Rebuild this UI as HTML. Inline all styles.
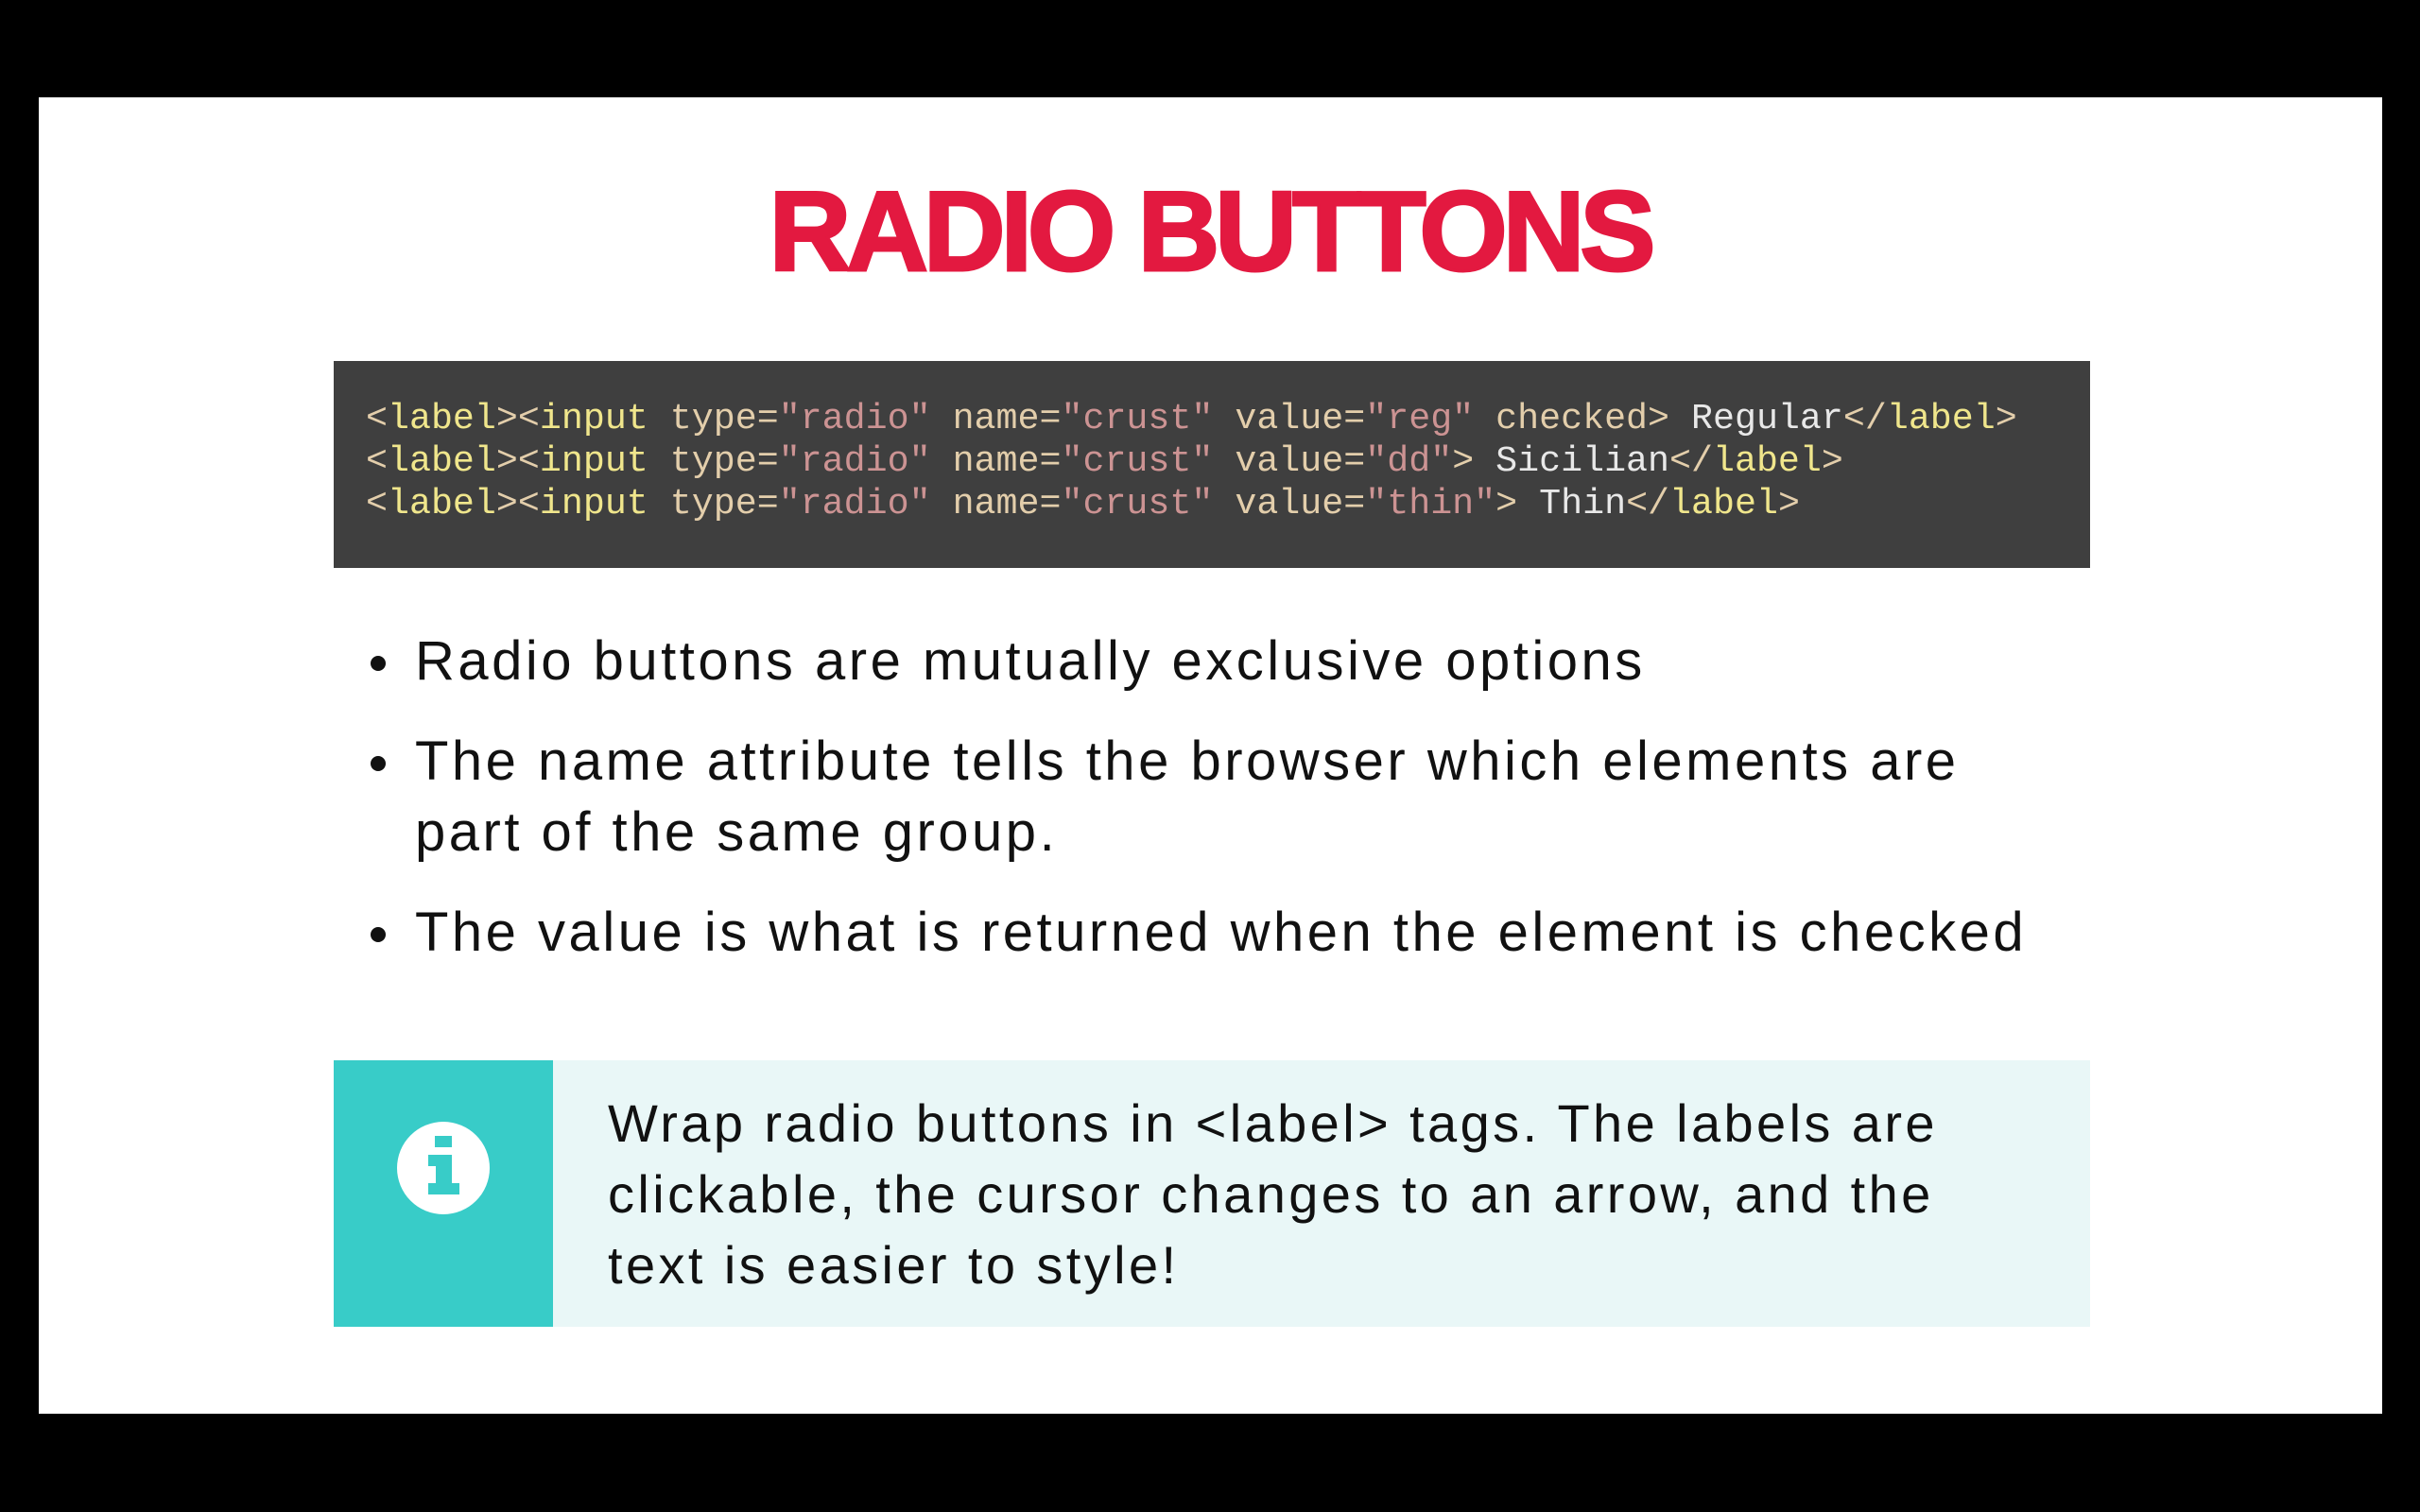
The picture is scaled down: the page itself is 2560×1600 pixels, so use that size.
<!DOCTYPE html>
<html><head><meta charset="utf-8"><style>
html,body{margin:0;padding:0;width:2560px;height:1600px;background:#000;overflow:hidden}
.slide{position:absolute;left:41px;top:103px;width:2479px;height:1393px;background:#fff}
.title{position:absolute;left:0;width:2560px;top:180px;text-align:center;font-family:"Liberation Sans",sans-serif;font-weight:bold;font-size:120px;letter-spacing:-5px;color:#E31940;line-height:130px;-webkit-text-stroke:3px #E31940}
.code{position:absolute;left:353px;top:382px;width:1858px;height:219px;background:#3f3f3f}
.code pre{margin:0;position:absolute;left:34px;top:39px;font-family:"Liberation Mono",monospace;font-size:38.3px;line-height:45px;color:#dcdccc}
.t{color:#f0e68c}.b{color:#e3ceab}.s{color:#cc9393}.w{color:#e8e8e8}
ul{position:absolute;left:439px;top:662px;margin:0;padding:0;list-style:none;font-family:"Liberation Sans",sans-serif;font-size:58px;line-height:75px;color:#111;width:1760px;letter-spacing:3.5px}
li{position:relative;margin-bottom:31px}
li:before{content:"";position:absolute;left:-47px;top:32px;width:16px;height:16px;border-radius:50%;background:#111}
.info{position:absolute;left:353px;top:1122px;width:1858px;height:282px;background:#e9f7f7}
.info .bar{position:absolute;left:0;top:0;width:232px;height:282px;background:#38ccc8}
.info .txt{position:absolute;left:290px;top:29px;font-family:"Liberation Sans",sans-serif;font-size:56px;line-height:75px;color:#111;width:1500px;letter-spacing:3.4px}
</style></head><body>
<div class="slide"></div>
<div class="title">RADIO BUTTONS</div>
<div class="code"><pre><span class="b">&lt;</span><span class="t">label</span><span class="b">&gt;&lt;</span><span class="t">input</span> <span class="b">type=</span><span class="s">"radio"</span> <span class="b">name=</span><span class="s">"crust"</span> <span class="b">value=</span><span class="s">"reg"</span> <span class="b">checked&gt;</span> <span class="w">Regular</span><span class="b">&lt;/</span><span class="t">label</span><span class="b">&gt;</span>
<span class="b">&lt;</span><span class="t">label</span><span class="b">&gt;&lt;</span><span class="t">input</span> <span class="b">type=</span><span class="s">"radio"</span> <span class="b">name=</span><span class="s">"crust"</span> <span class="b">value=</span><span class="s">"dd"</span><span class="b">&gt;</span> <span class="w">Sicilian</span><span class="b">&lt;/</span><span class="t">label</span><span class="b">&gt;</span>
<span class="b">&lt;</span><span class="t">label</span><span class="b">&gt;&lt;</span><span class="t">input</span> <span class="b">type=</span><span class="s">"radio"</span> <span class="b">name=</span><span class="s">"crust"</span> <span class="b">value=</span><span class="s">"thin"</span><span class="b">&gt;</span> <span class="w">Thin</span><span class="b">&lt;/</span><span class="t">label</span><span class="b">&gt;</span></pre></div>
<ul>
<li>Radio buttons are mutually exclusive options</li>
<li>The name attribute tells the browser which elements are<br>part of the same group.</li>
<li>The value is what is returned when the element is checked</li>
</ul>
<div class="info"><div class="bar">
<svg width="232" height="282" viewBox="0 0 232 282"><circle cx="116" cy="114" r="49" fill="#fff"/><rect x="107" y="80" width="18" height="12" fill="#38ccc8"/><path d="M100 100h25v30h8v12h-33v-12h8v-18h-8z" fill="#38ccc8"/></svg>
</div><div class="txt">Wrap radio buttons in &lt;label&gt; tags. The labels are<br>clickable, the cursor changes to an arrow, and the<br>text is easier to style!</div></div>
</body></html>
